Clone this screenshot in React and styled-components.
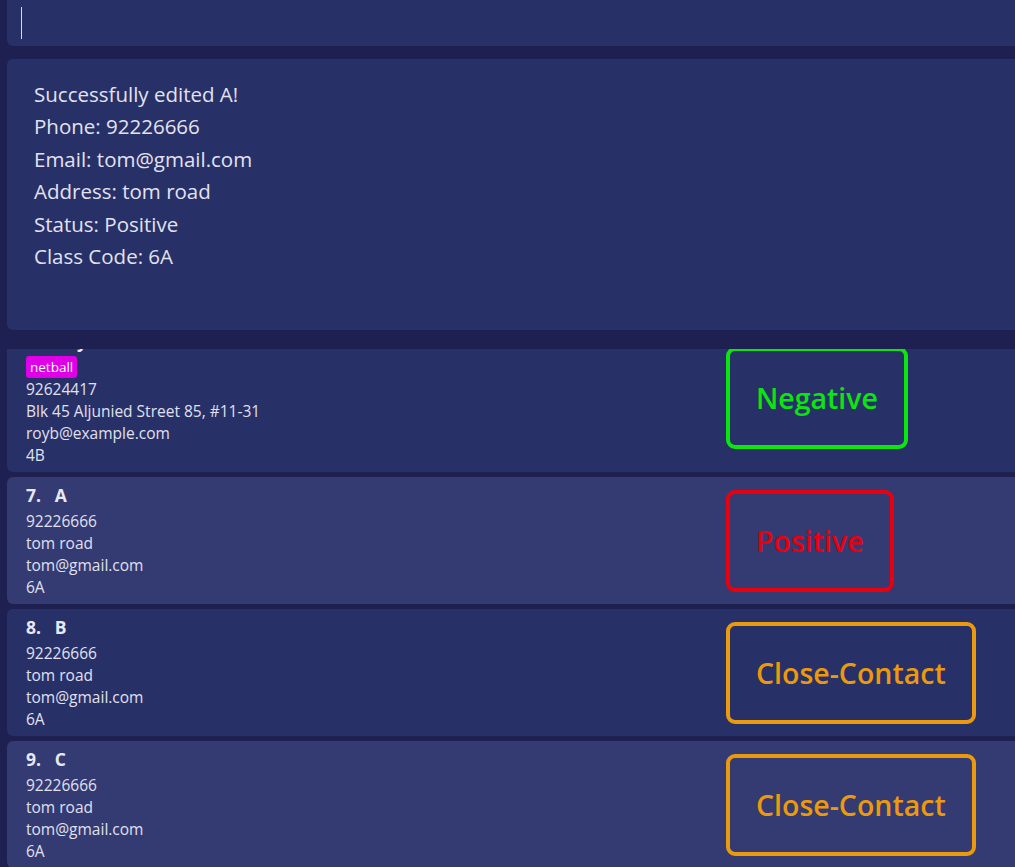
import React, { useLayoutEffect, useRef } from 'react'
import styled, { createGlobalStyle } from 'styled-components'

const GlobalStyle = createGlobalStyle`
  html, body {
    margin: 0;
    padding: 0;
    background: #1e2052;
    font-family: "Open Sans", "Noto Sans", sans-serif;
  }
  * { box-sizing: border-box; }
`

const persons = [
  {
    index: 6,
    name: 'Roy Balakrishnan',
    tags: ['netball'],
    phone: '92624417',
    address: 'Blk 45 Aljunied Street 85, #11-31',
    email: 'royb@example.com',
    classCode: '4B',
    status: 'Negative',
  },
  { index: 7, name: 'A', tags: [], phone: '92226666', address: 'tom road', email: 'tom@gmail.com', classCode: '6A', status: 'Positive' },
  { index: 8, name: 'B', tags: [], phone: '92226666', address: 'tom road', email: 'tom@gmail.com', classCode: '6A', status: 'Close-Contact' },
  { index: 9, name: 'C', tags: [], phone: '92226666', address: 'tom road', email: 'tom@gmail.com', classCode: '6A', status: 'Close-Contact' },
]

const statusColors = {
  Negative: '#0be60f',
  Positive: '#e9000e',
  'Close-Contact': '#eb990d',
}

function App() {
  const listRef = useRef(null)

  // list is scrolled down a little, like in the app
  useLayoutEffect(() => {
    if (listRef.current) listRef.current.scrollTop = 26
  }, [])

  return (
    <Window>
      <GlobalStyle />
      <CommandBox>
        <Caret />
      </CommandBox>
      <ResultBox>
        <div>Successfully edited A!</div>
        <div>Phone: 92226666</div>
        <div>Email: tom@gmail.com</div>
        <div>Address: tom road</div>
        <div>Status: Positive</div>
        <div>Class Code: 6A</div>
      </ResultBox>
      <ListPanel ref={listRef}>
        {persons.map((p) => (
          <Card key={p.index} $odd={p.index % 2 === 1}>
            <Info>
              <Name>{p.index}.   {p.name}</Name>
              {p.tags.length > 0 && (
                <Tags>
                  {p.tags.map((t) => <Tag key={t}>{t}</Tag>)}
                </Tags>
              )}
              <Line>{p.phone}</Line>
              <Line>{p.address}</Line>
              <Line>{p.email}</Line>
              <Line>{p.classCode}</Line>
            </Info>
            <Status $color={statusColors[p.status]}>{p.status}</Status>
          </Card>
        ))}
      </ListPanel>
    </Window>
  )
}

const Window = styled.div`
  height: 100vh;
  display: flex;
  flex-direction: column;
  padding-left: 7px;
  overflow: hidden;
`

const CommandBox = styled.div`
  flex: 0 0 46px;
  background: #283068;
  border-radius: 0 0 0 6px;
  display: flex;
  align-items: center;
  padding-left: 14px;
`

const Caret = styled.div`
  width: 1px;
  height: 32px;
  background: #d9d9ea;
`

const ResultBox = styled.div`
  flex: 0 0 271px;
  margin-top: 13px;
  background: #283068;
  border-radius: 6px 0 0 6px;
  padding: 19px 27px;
  color: #e2e2ef;
  font-size: 20.5px;
  line-height: 32.4px;
`

const ListPanel = styled.div`
  flex: 1;
  margin-top: 19px;
  overflow: hidden;
`

const Card = styled.div`
  display: flex;
  align-items: center;
  background: ${(p) => (p.$odd ? '#343a72' : '#283068')};
  border-radius: 6px 0 0 6px;
  padding: 6px 0 6px 19px;
  margin-bottom: 5px;
`

const Info = styled.div`
  flex: 0 0 700px;
  display: flex;
  flex-direction: column;
  color: #e0e0ee;
`

const Name = styled.div`
  font-size: 17.5px;
  font-weight: 700;
  line-height: 24px;
  white-space: pre;
  color: #e8e8f3;
  margin-bottom: 3px;
`

const Tags = styled.div`
  display: flex;
  gap: 4px;
`

const Tag = styled.span`
  background: #e000e8;
  color: #ffffff;
  font-size: 13.5px;
  line-height: 22px;
  padding: 0 4px;
  border-radius: 3px;
`

const Line = styled.div`
  font-size: 15.5px;
  line-height: 22px;
`

const Status = styled.div`
  border: 4px solid ${(p) => p.$color};
  color: ${(p) => p.$color};
  border-radius: 9px;
  font-size: 28.5px;
  font-weight: 600;
  line-height: 38px;
  padding: 28px 26px;
`

export default App
